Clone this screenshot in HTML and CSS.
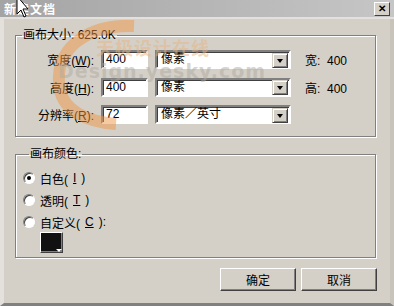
FILE: index.html
```html
<!DOCTYPE html>
<html>
<head>
<meta charset="utf-8">
<title>新建文档</title>
<link rel="stylesheet" href="styles.css">
</head>
<body>
<div class="dialog">
    <div class="titlebar">
        <span class="title">新建文档</span>
        <span class="close">✕</span>
    </div>
    <div class="body">
        <fieldset class="group size-group">
            <legend>画布大小: 625.0K</legend>
            <div class="size-grid">
                <label>宽度(<u>W</u>):</label>
                <span class="edit">400</span>
                <span class="combo"><span class="combo-text">像素</span><span class="combo-btn"></span></span>
                <span class="info">宽:&nbsp; 400</span>

                <label>高度(<u>H</u>):</label>
                <span class="edit">400</span>
                <span class="combo"><span class="combo-text">像素</span><span class="combo-btn"></span></span>
                <span class="info">高:&nbsp; 400</span>

                <label>分辨率(<u>R</u>):</label>
                <span class="edit">72</span>
                <span class="combo"><span class="combo-text">像素／英寸</span><span class="combo-btn"></span></span>
                <span class="info"></span>
            </div>
        </fieldset>

        <fieldset class="group color-group">
            <legend>画布颜色:</legend>
            <div class="radio-row"><span class="radio checked"></span>白色(<u>I</u>)</div>
            <div class="radio-row"><span class="radio"></span>透明(<u>T</u>)</div>
            <div class="radio-row"><span class="radio"></span>自定义(<u>C</u>):</div>
            <div class="swatch"><span class="swatch-arrow"></span></div>
        </fieldset>

        <div class="buttons">
            <button class="btn">确定</button>
            <button class="btn">取消</button>
        </div>
    </div>

    <!-- watermark from the source picture -->
    <div class="watermark">
        <svg class="swoosh" width="120" height="110" viewBox="0 0 120 110">
            <path d="M108 6 C60 4 26 30 34 70 C38 90 60 102 90 104" fill="none" stroke="rgba(238,150,70,0.5)" stroke-width="12"/>
        </svg>
        <span class="wm-cn">天极设计在线</span>
        <span class="wm-en">Design.yesky.com</span>
    </div>

    <svg class="cursor" width="14" height="22" viewBox="0 0 14 22">
        <path d="M1 -4 L1 14 L5 10 L8 17 L10 16 L7 9 L12 9 Z" fill="#fff" stroke="#000" stroke-width="1"/>
    </svg>
</div>
</body>
</html>
```

FILE: styles.css
```css
*{padding:0;margin:0;box-sizing:border-box;}
body{
    width:394px;
    height:306px;
    overflow:hidden;
    background:#d4d0c8;
    font-family:"Liberation Sans","Noto Sans CJK SC",sans-serif;
    font-size:12px;
    color:#000;
}
.dialog{
    position:relative;
    width:394px;
    height:306px;
    background:#d4d0c8;
    border-left:4px solid #e4e1dc;
    border-right:4px solid #c8c4bc;
    border-bottom:3px solid #808080;
}
.titlebar{
    height:19px;
    margin:0 -4px;
    padding:0 4px 0 4px;
    display:flex;
    align-items:center;
    justify-content:space-between;
    background:linear-gradient(to right,#a4a4a4,#c6c6c6);
    border-bottom:2px solid #e4e1dc;
}
.title{
    color:#fff;
    font-weight:bold;
    font-size:12px;
    letter-spacing:1px;
}
.close{
    width:16px;
    height:14px;
    display:flex;
    align-items:center;
    justify-content:center;
    font-size:10px;
    font-weight:bold;
    background:#d4d0c8;
    border:1px solid;
    border-color:#fff #404040 #404040 #fff;
}
.body{
    padding:9px 10px 0 11px;
}
.group{
    border:1px solid #808080;
    box-shadow:inset 1px 1px 0 #fff,1px 1px 0 #fff;
    width:361px;
}
.group legend{
    margin-left:6px;
    padding:0 1px;
    line-height:14px;
}
.size-group{
    padding:8px 0 12px 0;
}
.size-grid{
    display:grid;
    grid-template-columns:78px 47px 136px auto;
    grid-auto-rows:19px;
    column-gap:7px;
    row-gap:8.5px;
    align-items:center;
}
.size-grid label{
    text-align:right;
}
.edit,.combo{
    height:19px;
    background:#fff;
    border:2px solid;
    border-color:#808080 #fff #fff #808080;
    box-shadow:inset 1px 1px 0 #404040;
    display:flex;
    align-items:center;
    padding-left:3px;
    line-height:15px;
}
.combo{
    justify-content:space-between;
    padding:0 1px 0 4px;
}
.combo-btn{
    width:16px;
    height:15px;
    margin-top:1px;
    background:#d4d0c8;
    border:1px solid;
    border-color:#d4d0c8 #404040 #404040 #d4d0c8;
    box-shadow:inset 1px 1px 0 #fff,inset -1px -1px 0 #808080;
    position:relative;
}
.combo-btn::after{
    content:"";
    position:absolute;
    left:4px;
    top:5px;
    border-left:3.5px solid transparent;
    border-right:3.5px solid transparent;
    border-top:4px solid #000;
}
.info{
    padding-left:7px;
}
.color-group{
    margin-top:10px;
    padding:6px 0 4px 7px;
}
.radio-row{
    display:flex;
    align-items:center;
    height:22px;
    gap:5px;
}
.radio{
    width:12px;
    height:12px;
    border-radius:50%;
    background:#fff;
    border:1px solid;
    border-color:#808080 #fff #fff #808080;
    box-shadow:inset 1px 1px 0 #404040;
    position:relative;
}
.radio.checked::after{
    content:"";
    position:absolute;
    left:3px;
    top:3px;
    width:4px;
    height:4px;
    border-radius:50%;
    background:#000;
}
.swatch{
    margin:-1px 0 0 17px;
    width:23px;
    height:21px;
    background:#111;
    border:1px solid;
    border-color:#fff #404040 #404040 #fff;
    box-shadow:inset -1px -1px 0 #808080;
    position:relative;
}
.swatch-arrow{
    position:absolute;
    right:0;
    bottom:0;
    border-left:3px solid transparent;
    border-right:3px solid transparent;
    border-top:3px solid #fff;
}
.buttons{
    display:flex;
    justify-content:flex-end;
    gap:5px;
    margin-top:10px;
    width:362px;
}
.btn{
    width:76px;
    height:23px;
    font-family:"Liberation Sans","Noto Sans CJK SC",sans-serif;
    font-size:12px;
    background:#d4d0c8;
    border:1px solid;
    border-color:#fff #404040 #404040 #fff;
    box-shadow:inset -1px -1px 0 #808080;
}
.watermark{
    pointer-events:none;
}
.swoosh{
    position:absolute;
    left:22px;
    top:20px;
}
.wm-cn{
    position:absolute;
    left:92px;
    top:34px;
    font-size:18px;
    font-weight:bold;
    color:rgba(230,180,130,0.5);
    letter-spacing:1px;
}
.wm-en{
    position:absolute;
    left:54px;
    top:60px;
    font-family:"DejaVu Sans",sans-serif;
    font-size:19px;
    font-weight:bold;
    color:rgba(175,170,160,0.5);
    letter-spacing:1px;
}
.cursor{
    position:absolute;
    left:12px;
    top:0;
}
```
